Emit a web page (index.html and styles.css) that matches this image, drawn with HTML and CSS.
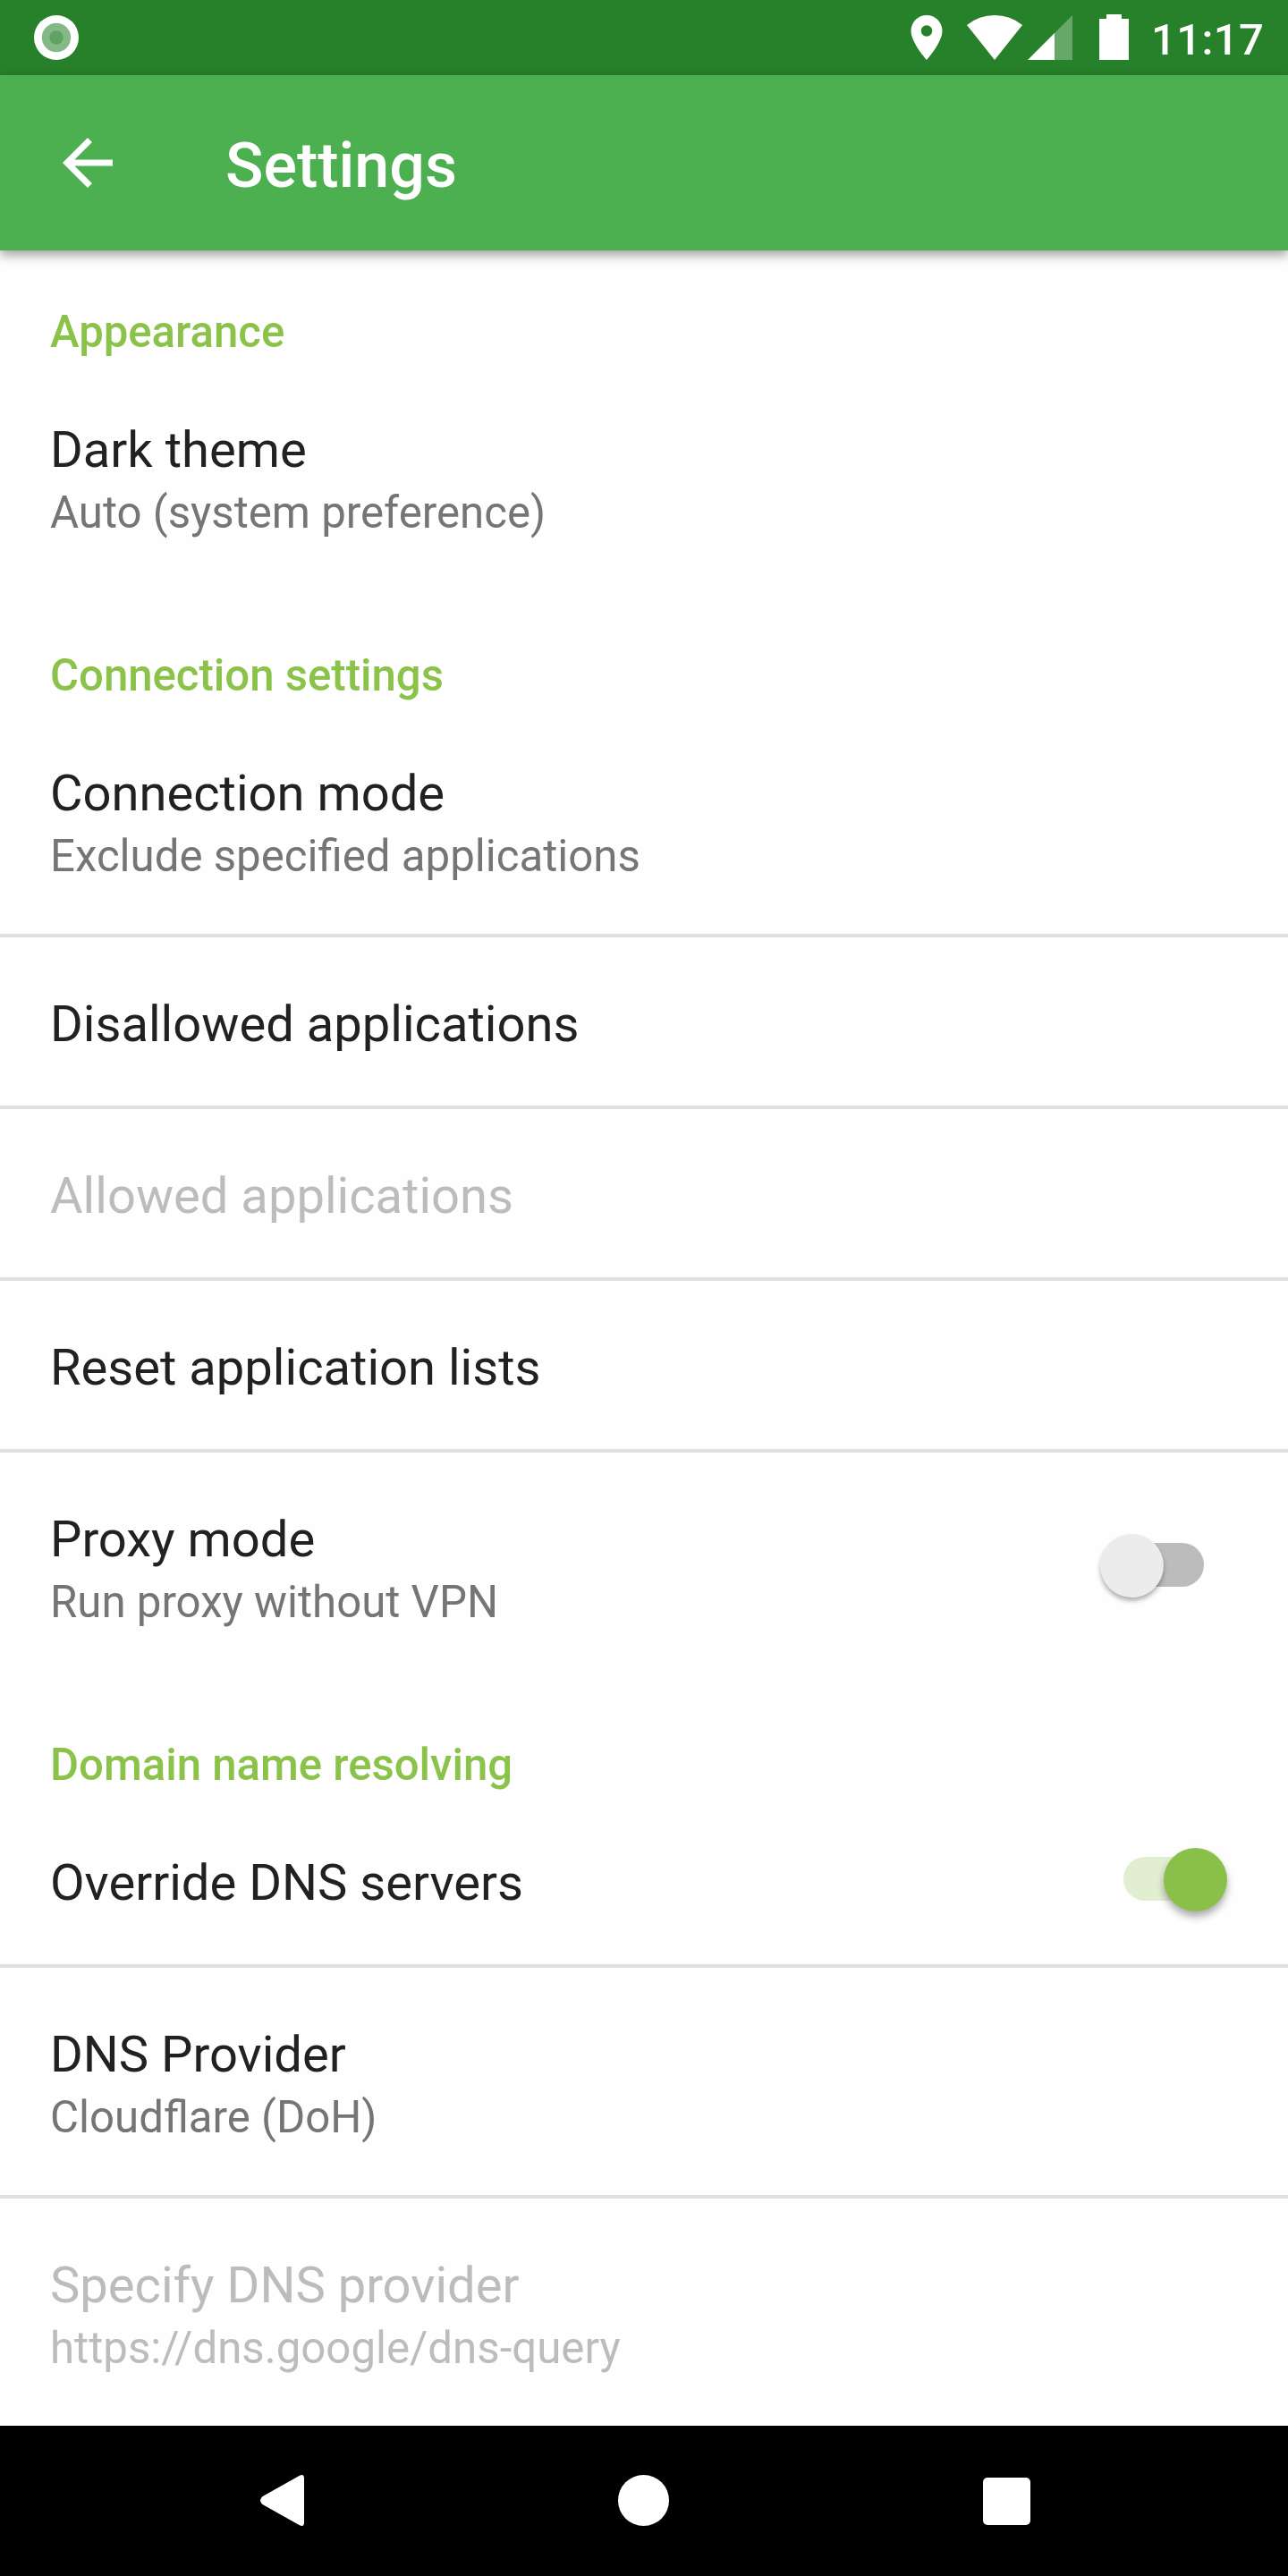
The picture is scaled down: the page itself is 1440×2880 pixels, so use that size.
FILE: index.html
```html
<!DOCTYPE html>
<html lang="en">
<head>
<meta charset="utf-8">
<title>Settings</title>
<link rel="stylesheet" href="styles.css">
</head>
<body>
<div class="screen">
  <div class="status-bar">
    <svg class="status-app" width="50" height="50" viewBox="0 0 50 50"><circle cx="25" cy="25" r="25" fill="#fff"/><circle cx="25" cy="25" r="16.2" fill="#84b886"/><circle cx="25" cy="25" r="7.7" fill="#5fa262"/></svg>
    <svg class="status-icons" width="244" height="52" viewBox="0 0 244 52">
      <path transform="translate(-12 -4) scale(2.5)" fill="#fff" d="M12 2C8.13 2 5 5.13 5 9c0 5.25 7 13 7 13s7-7.75 7-13c0-3.87-3.13-7-7-7zm0 9.5a2.5 2.5 0 1 1 0-5 2.5 2.5 0 0 1 0 5z"/>
      <path fill="#fff" d="M94 51L63 12A49 49 0 0 1 125 12Z"/>
      <path fill="#fff" fill-opacity=".3" d="M181 1V51H161V21Z"/>
      <path fill="#fff" d="M131 51L161 21V51Z"/>
      <path fill="#fff" d="M219 0h17v5h8v46h-33V5h8z"/>
    </svg>
    <span class="clock">11:17</span>
  </div>
  <header class="app-bar">
    <svg class="back" width="84" height="84" viewBox="0 0 24 24"><path fill="#fff" d="M20 11H7.83l5.59-5.59L12 4l-8 8 8 8 1.41-1.41L7.83 13H20z"/></svg>
    <h1 class="title">Settings</h1>
  </header>
  <main class="list">
    <h2 class="category">Appearance</h2>
    <div class="row"><div class="text"><div class="name">Dark theme</div><div class="summary">Auto (system preference)</div></div></div>
    <h2 class="category">Connection settings</h2>
    <div class="row"><div class="text"><div class="name">Connection mode</div><div class="summary">Exclude specified applications</div></div></div>
    <div class="row single divided"><div class="text"><div class="name">Disallowed applications</div></div></div>
    <div class="row single divided disabled"><div class="text"><div class="name">Allowed applications</div></div></div>
    <div class="row single divided"><div class="text"><div class="name">Reset application lists</div></div></div>
    <div class="row divided"><div class="text"><div class="name">Proxy mode</div><div class="summary">Run proxy without VPN</div></div><div class="switch"><div class="thumb"></div></div></div>
    <h2 class="category">Domain name resolving</h2>
    <div class="row single"><div class="text"><div class="name">Override DNS servers</div></div><div class="switch on"><div class="thumb"></div></div></div>
    <div class="row divided"><div class="text"><div class="name">DNS Provider</div><div class="summary">Cloudflare (DoH)</div></div></div>
    <div class="row divided disabled"><div class="text"><div class="name">Specify DNS provider</div><div class="summary">https://dns.google/dns-query</div></div></div>
  </main>
  <nav class="nav-bar">
    <svg width="60" height="60" viewBox="0 0 60 60"><path fill="#fff" d="M48.500 1.900Q54 -1 54 5V54Q54 60 48.500 57L7.500 34Q2.500 29.500 7.500 25Z"/></svg>
    <svg width="60" height="60" viewBox="0 0 60 60"><circle cx="28.500" cy="29.500" r="28.500" fill="#fff"/></svg>
    <svg width="60" height="60" viewBox="0 0 60 60"><rect x="3" y="4" width="53" height="53" rx="5" fill="#fff"/></svg>
  </nav>
</div>
</body>
</html>
```
FILE: styles.css
```css
* { box-sizing: border-box; }
body { margin: 0; background: #fff; font-family: Roboto, sans-serif; }
.screen { width: 1440px; height: 2880px; display: flex; flex-direction: column; overflow: hidden; background: #fefefe; }

.status-bar { height: 84px; flex: none; display: flex; align-items: flex-start; background: #27812a; padding: 16px 28px 0 38px; }
.status-app { margin-top: 1px; }
.status-icons { margin-left: auto; }
.clock { width: 125px; margin-left: 25px; color: #fff; font-size: 49px; line-height: 57px; font-weight: 500; letter-spacing: .4px; white-space: nowrap; }

.app-bar { height: 196px; flex: none; display: flex; align-items: flex-start; padding: 56px; background: #4caf50; position: relative; box-shadow: 0 5px 12px rgba(0, 0, 0, .38); }
.title { margin: 4px 0 0 112px; color: #fff; font-size: 70px; line-height: 82px; font-weight: 500; }

.list { flex: 1; min-height: 0; overflow: hidden; }
.category { height: 126px; margin: 0; padding: 67px 56px 0; color: #8bc34a; font-size: 49.1px; line-height: 57px; font-weight: 500; }
.category:first-child { height: 122px; padding-top: 63px; }
.row { height: 258px; padding: 68px 68px 0 56px; display: flex; justify-content: space-between; }
.single { height: 192px; }
.divided { border-top: 4px solid #e0e0e0; padding-top: 64px; }
.name { color: #212121; font-size: 56.12px; line-height: 66px; }
.summary { margin-top: 9px; color: #757575; font-size: 49.2px; line-height: 57px; }
.disabled .name, .disabled .summary { color: #bcbcbc; }

.switch { width: 90px; height: 49px; margin: 37px 26px 0 0; border-radius: 25px; background: #bcbcbc; }
.thumb { width: 71px; height: 71px; margin: -10px 0 0 -26px; border-radius: 50%; background: #ececec; box-shadow: 0 4px 5px rgba(0, 0, 0, .3); }
.single .switch { margin-top: 4px; }
.on { background: #e1eed1; }
.on .thumb { margin-left: 45px; background: #89c04a; box-shadow: 0 6px 8px rgba(0, 0, 0, .32); }

.nav-bar { height: 168px; flex: none; display: flex; justify-content: space-between; align-items: flex-start; padding: 54px 284px 0 286px; background: #000; }
```
